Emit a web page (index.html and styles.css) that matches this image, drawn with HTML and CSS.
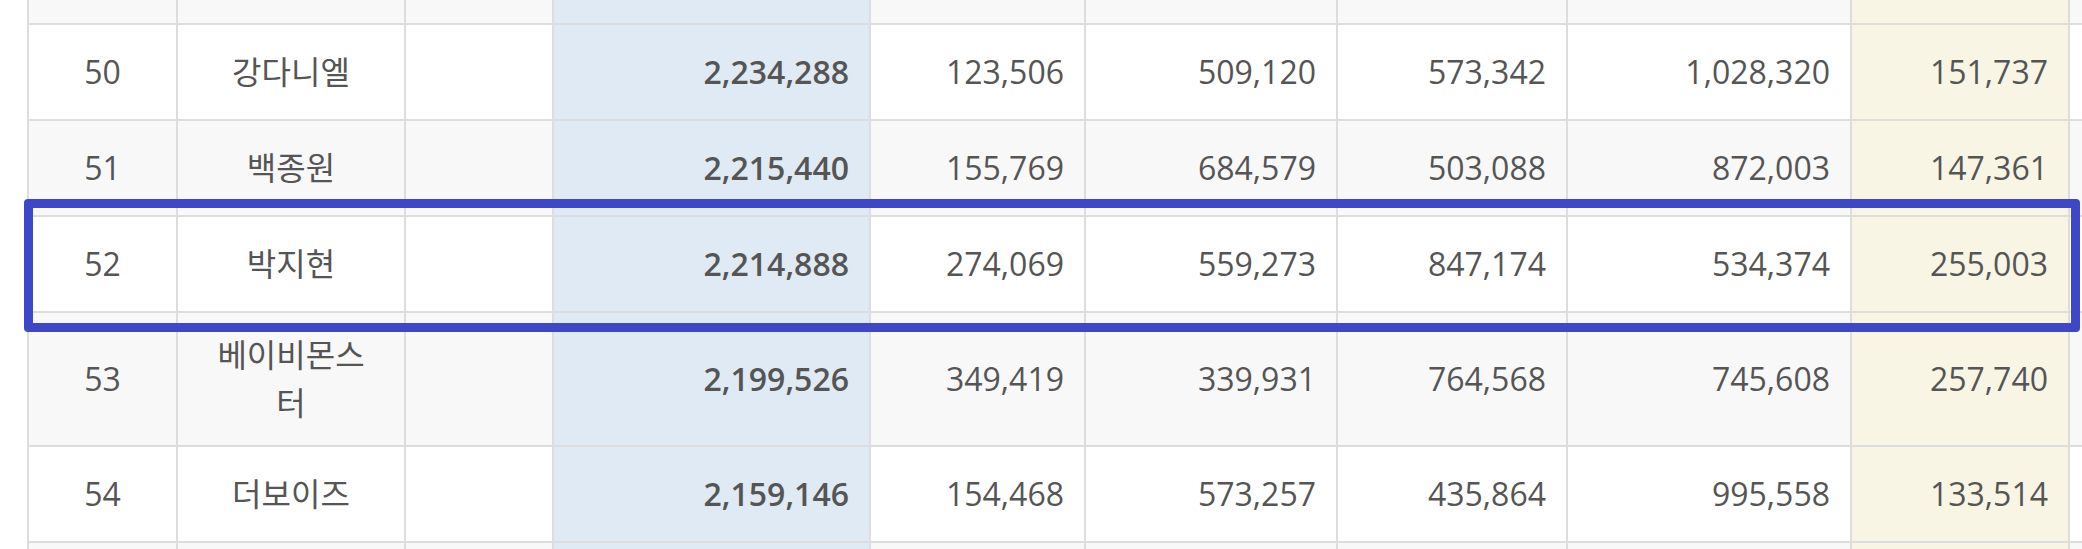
FILE: index.html
```html
<!DOCTYPE html>
<html lang="ko">
<head>
<meta charset="utf-8">
<title>순위표</title>
<link rel="stylesheet" href="styles.css">
</head>
<body>
<div class="sheet">
  <div class="row row-cut-top stripe">
    <div class="cell"></div><div class="cell"></div><div class="cell"></div><div class="cell total"></div><div class="cell"></div><div class="cell"></div><div class="cell"></div><div class="cell"></div><div class="cell extra"></div><div class="cell"></div>
  </div>
  <div class="row">
    <div class="cell rank">50</div><div class="cell name">강다니엘</div><div class="cell"></div><div class="cell num total">2,234,288</div><div class="cell num">123,506</div><div class="cell num">509,120</div><div class="cell num">573,342</div><div class="cell num">1,028,320</div><div class="cell num extra">151,737</div><div class="cell"></div>
  </div>
  <div class="row stripe">
    <div class="cell rank">51</div><div class="cell name">백종원</div><div class="cell"></div><div class="cell num total">2,215,440</div><div class="cell num">155,769</div><div class="cell num">684,579</div><div class="cell num">503,088</div><div class="cell num">872,003</div><div class="cell num extra">147,361</div><div class="cell"></div>
  </div>
  <div class="row marked">
    <div class="cell rank">52</div><div class="cell name">박지현</div><div class="cell"></div><div class="cell num total">2,214,888</div><div class="cell num">274,069</div><div class="cell num">559,273</div><div class="cell num">847,174</div><div class="cell num">534,374</div><div class="cell num extra">255,003</div><div class="cell"></div>
    <div class="highlight"></div>
  </div>
  <div class="row stripe">
    <div class="cell rank">53</div><div class="cell name">베이비몬스터</div><div class="cell"></div><div class="cell num total">2,199,526</div><div class="cell num">349,419</div><div class="cell num">339,931</div><div class="cell num">764,568</div><div class="cell num">745,608</div><div class="cell num extra">257,740</div><div class="cell"></div>
  </div>
  <div class="row">
    <div class="cell rank">54</div><div class="cell name">더보이즈</div><div class="cell"></div><div class="cell num total">2,159,146</div><div class="cell num">154,468</div><div class="cell num">573,257</div><div class="cell num">435,864</div><div class="cell num">995,558</div><div class="cell num extra">133,514</div><div class="cell"></div>
  </div>
  <div class="row row-cut-bottom stripe">
    <div class="cell"></div><div class="cell"></div><div class="cell"></div><div class="cell total"></div><div class="cell"></div><div class="cell"></div><div class="cell"></div><div class="cell"></div><div class="cell extra"></div><div class="cell"></div>
  </div>
</div>
</body>
</html>
```

FILE: styles.css
```css
html, body {
  margin: 0;
  padding: 0;
  background: #ffffff;
}

body {
  width: 2082px;
  height: 549px;
  overflow: hidden;
  font-family: "Open Sans", "Noto Sans CJK KR", sans-serif;
  font-size: 32px;
  color: #555555;
}

.sheet {
  display: flex;
  flex-direction: column;
  gap: 2px;
  width: max-content;
  margin-left: 27px;
  padding: 0 2px;
  background: #dddddd;
}

.row {
  display: grid;
  grid-template-columns: 147px 226px 146px 315px 213px 250px 228px 282px 216px 200px;
  gap: 2px;
}

.cell {
  box-sizing: border-box;
  min-height: 94px;
  padding: 18px 20px;
  line-height: 48px;
  display: flex;
  align-items: center;
  justify-content: center;
  text-align: center;
  background: #ffffff;
}

.name {
  padding-left: 28px;
  padding-right: 28px;
}

.stripe .cell {
  background: #f8f8f8;
}

.row .cell.total {
  background: #dfeaf4;
  font-weight: 600;
}

.row .cell.extra {
  background: #f8f5e4;
}

.num {
  justify-content: flex-end;
  text-align: right;
}

.row-cut-top .cell {
  min-height: 0;
  height: 23px;
  padding: 0;
}

.row-cut-bottom .cell {
  min-height: 0;
  height: 30px;
  padding: 0;
}

.marked {
  position: relative;
}

.highlight {
  position: absolute;
  top: -18px;
  bottom: -21px;
  left: -5px;
  width: 2056px;
  box-sizing: border-box;
  border: 9px solid #3e47c8;
  border-radius: 4px;
  pointer-events: none;
}
```
